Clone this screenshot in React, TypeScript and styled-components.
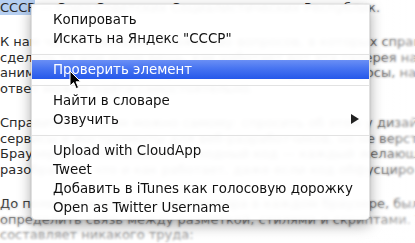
import React from "react";
import styled, { createGlobalStyle } from "styled-components";

const Global = createGlobalStyle`
  html, body { margin: 0; padding: 0; background: #fff; }
  body { width: 415px; height: 243px; overflow: hidden; }
`;

const Page = styled.div`
  position: relative;
  width: 415px;
  height: 243px;
  overflow: hidden;
  background: #fff;
`;

const Article = styled.div`
  font-family: "DejaVu Sans", "Liberation Sans", sans-serif;
  font-size: 13px;
  line-height: 15.6px;
  color: #2a2a2a;
  white-space: nowrap;
`;

const Para = styled.p`
  margin: 0 0 18.6px 0;
`;

const Line = styled.span`
  display: block;
`;

const Selected = styled.span`
  background: #b6cff1;
`;

const Haze = styled.div`
  position: absolute;
  inset: 0;
  pointer-events: none;
  background:
    linear-gradient(to right, rgba(255,255,255,0) 350px, rgba(255,255,255,0.55) 415px),
    linear-gradient(to bottom, rgba(255,255,255,0) 200px, rgba(255,255,255,0.65) 243px);
  backdrop-filter: blur(1px);
  -webkit-mask-image:
    linear-gradient(to right, transparent 340px, #000 400px),
    linear-gradient(to bottom, transparent 195px, #000 235px);
  mask-image:
    linear-gradient(to right, transparent 340px, #000 400px),
    linear-gradient(to bottom, transparent 195px, #000 235px);
`;

const Menu = styled.div`
  position: absolute;
  left: 31px;
  top: 4px;
  width: 339px;
  padding: 5px 0 2px;
  box-sizing: border-box;
  background: rgba(255, 255, 255, 0.95);
  backdrop-filter: blur(2px);
  border: 1px solid rgba(0, 0, 0, 0.12);
  border-top-color: rgba(0, 0, 0, 0.08);
  border-radius: 0 0 5px 5px;
  box-shadow: 0 5px 14px rgba(0, 0, 0, 0.35), 0 0 2px rgba(0, 0, 0, 0.15);
  font-family: "DejaVu Sans", "Liberation Sans", sans-serif;
  font-size: 13.4px;
`;

const Item = styled.div<{ $active?: boolean }>`
  position: relative;
  height: 19px;
  line-height: 19px;
  padding-left: 21px;
  color: ${(p) => (p.$active ? "#fff" : "#111")};
  background: ${(p) =>
    p.$active
      ? "linear-gradient(to bottom, #6a8ff5 0%, #4774f1 45%, #2558ea 100%)"
      : "transparent"};
  white-space: nowrap;
`;

const Separator = styled.div`
  height: 12px;
  display: flex;
  align-items: center;
  &::after {
    content: "";
    flex: 1;
    height: 1px;
    background: #e2e2e2;
  }
`;

const SubArrow = styled.svg`
  position: absolute;
  right: 10px;
  top: 4px;
`;

const Cursor = styled.svg`
  position: absolute;
  left: 69px;
  top: 70px;
`;

export default function App() {
  return (
    <Page>
      <Global />
      <Article>
        <Para>
          <Line>
            <Selected>СССР</Selected> — Союз Советских Социалистических Республик.
          </Line>
        </Para>
        <Para>
          <Line>К нам часто приходит множество вопросов, в которых спрашивают,</Line>
          <Line>сделать ту или иную вещь, как работает вот эта галерея на сайте</Line>
          <Line>анимация на главной странице сайта, и другие вопросы, на которые</Line>
          <Line>ответ можно найти самостоятельно.</Line>
        </Para>
        <Para>
          <Line>Справиться с этим можно самому: спросить об этом у дизайнера</Line>
          <Line>сервисы и инструменты для веб-разработчиков, но не верстальщиков</Line>
          <Line>Браузер всем показывает исходный код — каждый желающий может</Line>
          <Line>разобраться, что и как работает, даже если код обфусцирован</Line>
        </Para>
        <Para>
          <Line>До появления удобного инспектора в каждом браузере, было непросто</Line>
          <Line>определить связь между разметкой, стилями и скриптами. Теперь это не</Line>
          <Line>составляет никакого труда:</Line>
        </Para>
      </Article>
      <Haze />
      <Menu>
        <Item>Копировать</Item>
        <Item>Искать на Яндекс "СССР"</Item>
        <Separator />
        <Item $active>Проверить элемент</Item>
        <Separator />
        <Item>Найти в словаре</Item>
        <Item>
          Озвучить
          <SubArrow width="8" height="10" viewBox="0 0 8 10">
            <path d="M0 0 L8 5 L0 10 Z" fill="#222" />
          </SubArrow>
        </Item>
        <Separator />
        <Item>Upload with CloudApp</Item>
        <Item>Tweet</Item>
        <Item>Добавить в iTunes как голосовую дорожку</Item>
        <Item>Open as Twitter Username</Item>
      </Menu>
      <Cursor width="14" height="21" viewBox="0 0 14 21">
        <path
          d="M1 1 L1 16 L4.6 12.6 L7.2 18.6 L9.6 17.6 L7 11.8 L11.8 11.8 Z"
          fill="#000"
          stroke="#fff"
          strokeWidth="1"
          strokeLinejoin="round"
        />
      </Cursor>
    </Page>
  );
}
